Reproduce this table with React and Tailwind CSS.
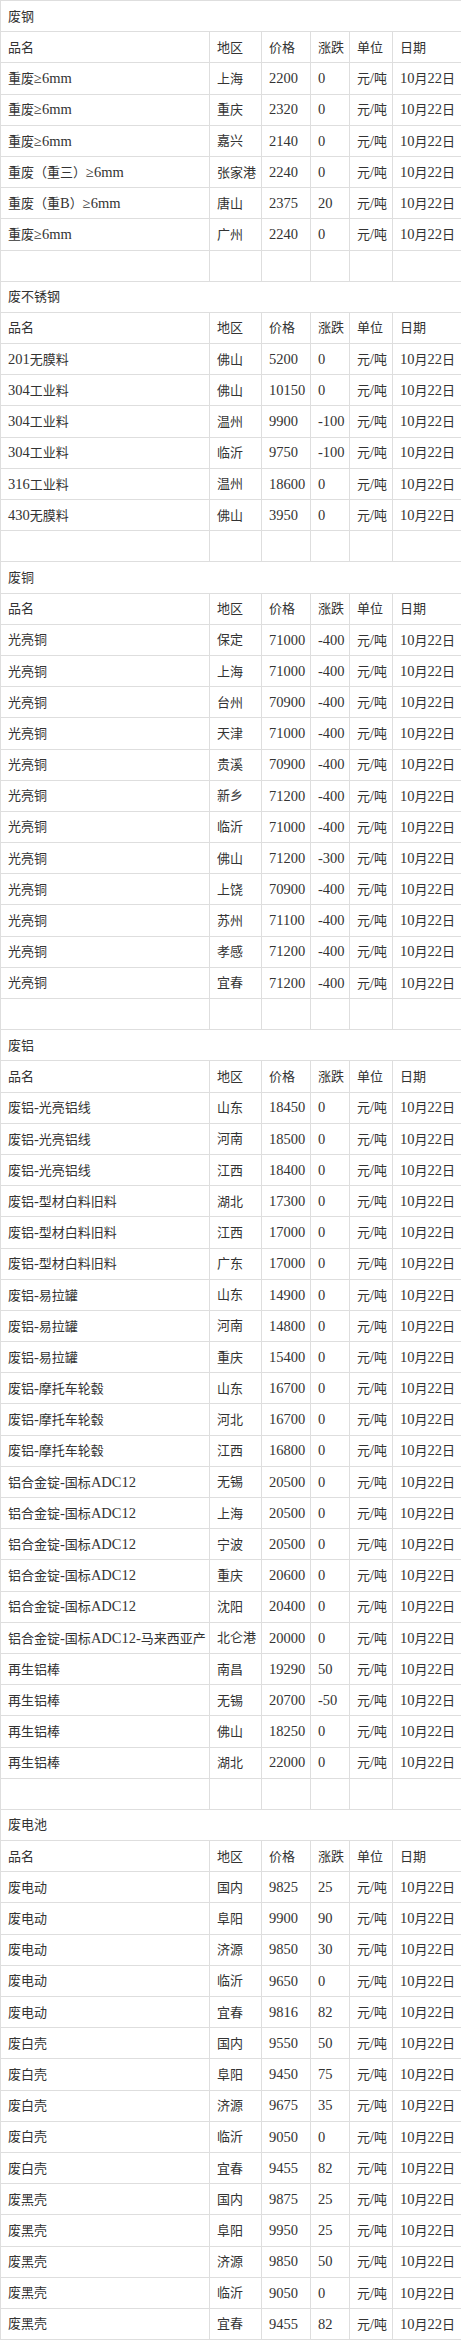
import React from 'react';

const DATE = '10月22日';
const UNIT = '元/吨';

const sections = [
  {
    title: '废钢',
    rows: [
      ['重废≥6mm', '上海', '2200', '0'],
      ['重废≥6mm', '重庆', '2320', '0'],
      ['重废≥6mm', '嘉兴', '2140', '0'],
      ['重废（重三）≥6mm', '张家港', '2240', '0'],
      ['重废（重B）≥6mm', '唐山', '2375', '20'],
      ['重废≥6mm', '广州', '2240', '0'],
    ],
  },
  {
    title: '废不锈钢',
    rows: [
      ['201无膜料', '佛山', '5200', '0'],
      ['304工业料', '佛山', '10150', '0'],
      ['304工业料', '温州', '9900', '-100'],
      ['304工业料', '临沂', '9750', '-100'],
      ['316工业料', '温州', '18600', '0'],
      ['430无膜料', '佛山', '3950', '0'],
    ],
  },
  {
    title: '废铜',
    rows: [
      ['光亮铜', '保定', '71000', '-400'],
      ['光亮铜', '上海', '71000', '-400'],
      ['光亮铜', '台州', '70900', '-400'],
      ['光亮铜', '天津', '71000', '-400'],
      ['光亮铜', '贵溪', '70900', '-400'],
      ['光亮铜', '新乡', '71200', '-400'],
      ['光亮铜', '临沂', '71000', '-400'],
      ['光亮铜', '佛山', '71200', '-300'],
      ['光亮铜', '上饶', '70900', '-400'],
      ['光亮铜', '苏州', '71100', '-400'],
      ['光亮铜', '孝感', '71200', '-400'],
      ['光亮铜', '宜春', '71200', '-400'],
    ],
  },
  {
    title: '废铝',
    rows: [
      ['废铝-光亮铝线', '山东', '18450', '0'],
      ['废铝-光亮铝线', '河南', '18500', '0'],
      ['废铝-光亮铝线', '江西', '18400', '0'],
      ['废铝-型材白料旧料', '湖北', '17300', '0'],
      ['废铝-型材白料旧料', '江西', '17000', '0'],
      ['废铝-型材白料旧料', '广东', '17000', '0'],
      ['废铝-易拉罐', '山东', '14900', '0'],
      ['废铝-易拉罐', '河南', '14800', '0'],
      ['废铝-易拉罐', '重庆', '15400', '0'],
      ['废铝-摩托车轮毂', '山东', '16700', '0'],
      ['废铝-摩托车轮毂', '河北', '16700', '0'],
      ['废铝-摩托车轮毂', '江西', '16800', '0'],
      ['铝合金锭-国标ADC12', '无锡', '20500', '0'],
      ['铝合金锭-国标ADC12', '上海', '20500', '0'],
      ['铝合金锭-国标ADC12', '宁波', '20500', '0'],
      ['铝合金锭-国标ADC12', '重庆', '20600', '0'],
      ['铝合金锭-国标ADC12', '沈阳', '20400', '0'],
      ['铝合金锭-国标ADC12-马来西亚产', '北仑港', '20000', '0'],
      ['再生铝棒', '南昌', '19290', '50'],
      ['再生铝棒', '无锡', '20700', '-50'],
      ['再生铝棒', '佛山', '18250', '0'],
      ['再生铝棒', '湖北', '22000', '0'],
    ],
  },
  {
    title: '废电池',
    last: true,
    rows: [
      ['废电动', '国内', '9825', '25'],
      ['废电动', '阜阳', '9900', '90'],
      ['废电动', '济源', '9850', '30'],
      ['废电动', '临沂', '9650', '0'],
      ['废电动', '宜春', '9816', '82'],
      ['废白壳', '国内', '9550', '50'],
      ['废白壳', '阜阳', '9450', '75'],
      ['废白壳', '济源', '9675', '35'],
      ['废白壳', '临沂', '9050', '0'],
      ['废白壳', '宜春', '9455', '82'],
      ['废黑壳', '国内', '9875', '25'],
      ['废黑壳', '阜阳', '9950', '25'],
      ['废黑壳', '济源', '9850', '50'],
      ['废黑壳', '临沂', '9050', '0'],
      ['废黑壳', '宜春', '9455', '82'],
    ],
  },
];

// latin runs (digits, mm, ADC, -, ≥, /) are set a bit larger than the CJK text
const Text = ({ value }) => {
  const parts = value.match(/[\x20-\x7e≥]+|[^\x20-\x7e≥]+/g) || [];
  return parts.map((p, i) =>
    /^[\x20-\x7e≥]+$/.test(p) ? (
      <span key={i} className="text-[14.5px]">
        {p}
      </span>
    ) : (
      <span key={i}>{p}</span>
    )
  );
};

const Cell = ({ children, colSpan }) => (
  <td
    colSpan={colSpan}
    className="border border-[#dedede] pl-[7px] pr-0 py-0 align-middle whitespace-nowrap overflow-hidden"
  >
    <Text value={children} />
  </td>
);

const Row = ({ cells }) => (
  <tr className="h-[31.2px]">
    {cells.map((c, i) => (
      <Cell key={i}>{c}</Cell>
    ))}
  </tr>
);

export default function App() {
  return (
    <div
      className="w-[461px] bg-white text-[13px] leading-none text-[#333]"
      style={{ fontFamily: '"Liberation Serif", "Noto Sans CJK SC", serif' }}
    >
      <table className="w-[461px] table-fixed border-collapse">
        <colgroup>
          <col className="w-[209px]" />
          <col className="w-[52px]" />
          <col className="w-[49px]" />
          <col className="w-[39px]" />
          <col className="w-[43px]" />
          <col className="w-[69px]" />
        </colgroup>
        <tbody>
          {sections.map((s) => (
            <React.Fragment key={s.title}>
              <tr className="h-[31.2px]">
                <Cell colSpan={6}>{s.title}</Cell>
              </tr>
              <Row cells={['品名', '地区', '价格', '涨跌', '单位', '日期']} />
              {s.rows.map((r, i) => (
                <Row key={i} cells={[...r, UNIT, DATE]} />
              ))}
              {!s.last && <Row cells={['', '', '', '', '', '']} />}
            </React.Fragment>
          ))}
        </tbody>
      </table>
    </div>
  );
}
